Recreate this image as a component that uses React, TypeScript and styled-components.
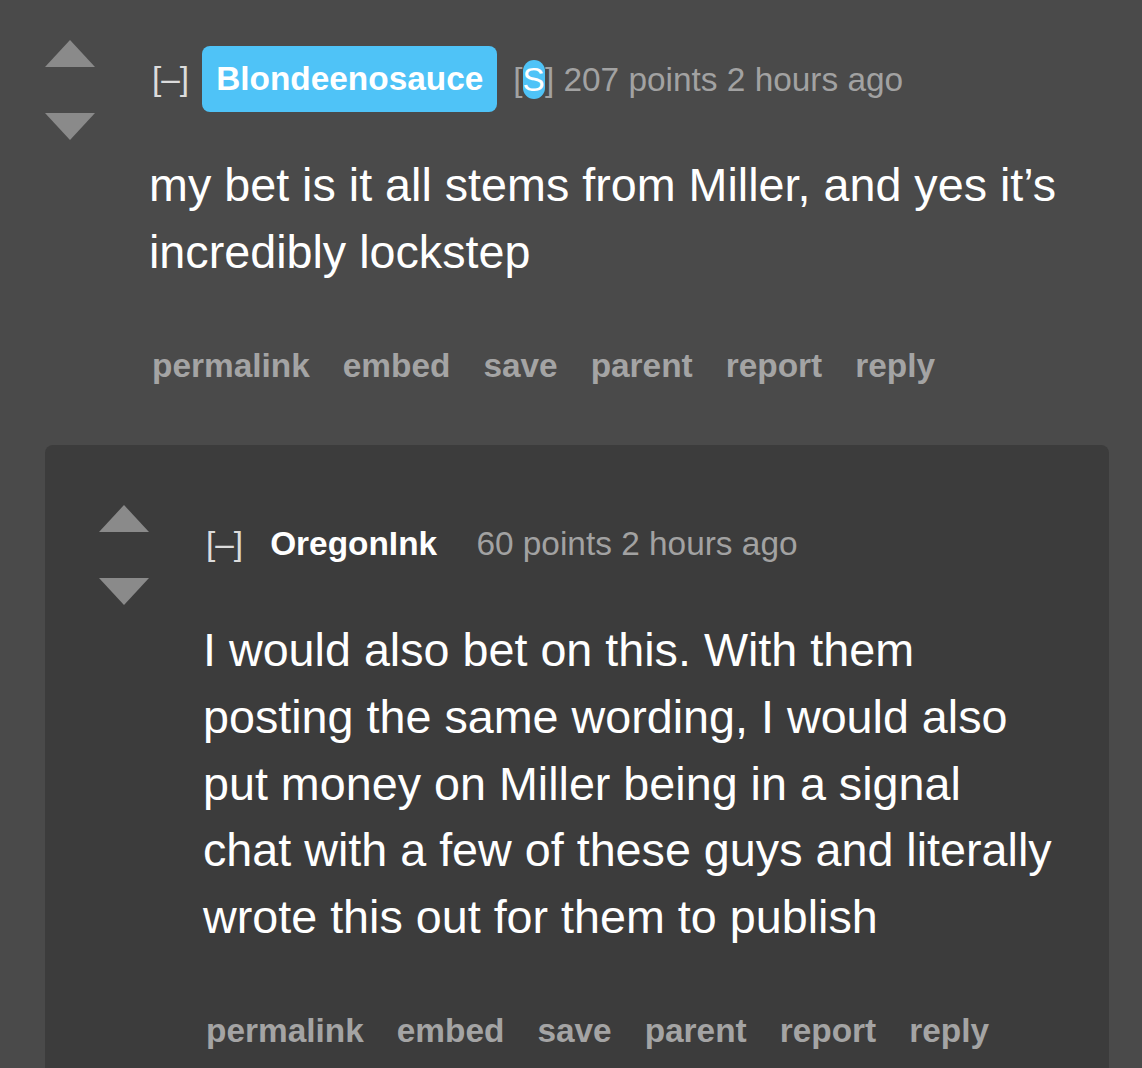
import React from "react";
import styled, { createGlobalStyle } from "styled-components";

const Global = createGlobalStyle`
  html, body {
    margin: 0;
    padding: 0;
    background: #4a4a4a;
    font-family: "Liberation Sans", Arial, sans-serif;
  }
  #root { min-height: 100vh; }
`;

const Page = styled.div`
  padding: 40px 33px 0 45px;
`;

const Row = styled.div`
  display: flex;
  align-items: flex-start;
`;

const Votes = styled.div`
  width: 50px;
  flex: none;
  margin-right: 54px;
  display: flex;
  flex-direction: column;
  gap: 46px;
`;

const Arrow = styled.svg`
  display: block;
  width: 50px;
  height: 27px;
  fill: #8a8a8a;
`;

const Entry = styled.div`
  flex: 1;
  min-width: 0;
  padding-top: 6px;
`;

const Header = styled.div`
  display: flex;
  align-items: center;
  gap: 13px;
  height: 66px;
  padding-left: 3px;
  font-size: 33.4px;
  white-space: pre;
`;

const Toggle = styled.span`
  color: #dcdcdc;
`;

const Author = styled.span<{ $op?: boolean }>`
  display: inline-block;
  height: 66px;
  line-height: 66px;
  padding: 0 14px;
  border-radius: 8px;
  font-weight: bold;
  color: #ffffff;
  background: ${(p) => (p.$op ? "#4fc3f7" : "transparent")};
`;

const Tagline = styled.span`
  margin-left: 3px;
  color: #a2a2a2;
`;

const Flair = styled.span`
  display: inline-block;
  line-height: 39px;
  border-radius: 12px;
  background: #4fc3f7;
  color: #ffffff;
`;

const Body = styled.p`
  margin: 40px 0 0;
  font-size: 46.7px;
  line-height: 66.75px;
  color: #ffffff;
`;

const Buttons = styled.div`
  display: flex;
  gap: 33px;
  margin-top: 60.5px;
  padding-left: 3px;
  font-size: 33.4px;
  line-height: 40px;
  font-weight: bold;
  color: #a4a4a4;
`;

const ChildCard = styled.div`
  margin-top: 59px;
  padding: 60px 54px 40px 54px;
  background: #3c3c3c;
  border-radius: 8px 8px 0 0;
`;

const UpArrow = () => (
  <Arrow viewBox="0 0 50 27">
    <polygon points="25,0 50,27 0,27" />
  </Arrow>
);

const DownArrow = () => (
  <Arrow viewBox="0 0 50 27">
    <polygon points="0,0 50,0 25,27" />
  </Arrow>
);

const actions = ["permalink", "embed", "save", "parent", "report", "reply"];

type CommentProps = {
  author: string;
  op?: boolean;
  points: number;
  text: string;
  children?: React.ReactNode;
};

const Comment = ({ author, op, points, text, children }: CommentProps) => (
  <div>
    <Row>
      <Votes>
        <UpArrow />
        <DownArrow />
      </Votes>
      <Entry>
        <Header>
          <Toggle>[–]</Toggle>
          <Author $op={op}>{author}</Author>
          <Tagline>
            {op ? (
              <>
                [<Flair>S</Flair>]
              </>
            ) : null}
            {` ${points} points 2 hours ago`}
          </Tagline>
        </Header>
        <Body>{text}</Body>
        <Buttons>
          {actions.map((a) => (
            <span key={a}>{a}</span>
          ))}
        </Buttons>
      </Entry>
    </Row>
    {children}
  </div>
);

export default function App() {
  return (
    <>
      <Global />
      <Page>
        <Comment
          author="Blondeenosauce"
          op
          points={207}
          text="my bet is it all stems from Miller, and yes it’s incredibly lockstep"
        >
          <ChildCard>
            <Comment
              author="OregonInk"
              points={60}
              text="I would also bet on this. With them posting the same wording, I would also put money on Miller being in a signal chat with a few of these guys and literally wrote this out for them to publish"
            />
          </ChildCard>
        </Comment>
      </Page>
    </>
  );
}
